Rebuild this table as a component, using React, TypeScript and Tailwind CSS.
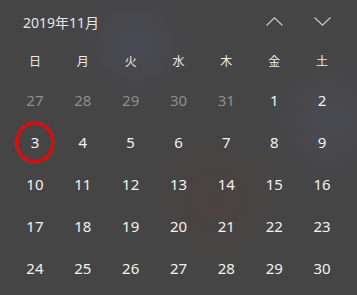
const days = [
  { n: 27, muted: true },
  { n: 28, muted: true },
  { n: 29, muted: true },
  { n: 30, muted: true },
  { n: 31, muted: true },
  ...Array.from({ length: 30 }, (_, i) => ({ n: i + 1, muted: false }))
]

const weekdays = ['日', '月', '火', '水', '木', '金', '土']

function Chevron({ up }: { up?: boolean }) {
  return (
    <svg width="17" height="9" viewBox="0 0 17 9" fill="none">
      <polyline
        points={up ? '0.5,8.5 8.5,0.8 16.5,8.5' : '0.5,0.5 8.5,8.2 16.5,0.5'}
        stroke="#c8c8c8"
        strokeWidth="1.2"
      />
    </svg>
  )
}

export default function App() {
  return (
    <div
      className="relative h-[295px] w-[357px] overflow-hidden bg-[#454545] bg-[radial-gradient(circle_at_135px_45px,#4a4a55_0px,transparent_60px),radial-gradient(circle_at_215px_200px,#4a4240_0px,transparent_70px),radial-gradient(circle_at_330px_120px,#4a4a52_0px,transparent_70px)] text-[#f2f2f2]"
      style={{ fontFamily: '"Noto Sans", "Noto Sans CJK JP", sans-serif' }}
    >
      {/* header */}
      <div className="flex h-[44px] items-center pr-[11px]">
        <span className="pl-[23px] pt-[1px] text-[14px] text-[#e6e6e6]">2019年11月</span>
        <div className="ml-auto flex">
          <div className="flex w-[48px] justify-center pb-[2px]">
            <Chevron up />
          </div>
          <div className="flex w-[48px] justify-center pb-[2px]">
            <Chevron />
          </div>
        </div>
      </div>

      {/* weekdays */}
      <div className="grid h-[35px] grid-cols-7 px-[11px]">
        {weekdays.map(w => (
          <div key={w} className="flex items-center justify-center text-[12px] text-[#ececec]">
            {w}
          </div>
        ))}
      </div>

      {/* days */}
      <div className="grid grid-cols-7 px-[11px]">
        {days.map((d, i) => (
          <div
            key={i}
            className={`relative flex h-[42px] items-center justify-center text-[15px] ${
              d.muted ? 'text-[#8e8e8e]' : 'text-[#f2f2f2]'
            }`}
          >
            {d.n === 3 && !d.muted && (
              <span className="absolute left-[5px] top-[1px] h-[41px] w-[38px] rounded-full border-[3px] border-[#e00a0a] shadow-[0_0_2px_#ff2020]" />
            )}
            <span className="relative">{d.n}</span>
          </div>
        ))}
      </div>
    </div>
  )
}
